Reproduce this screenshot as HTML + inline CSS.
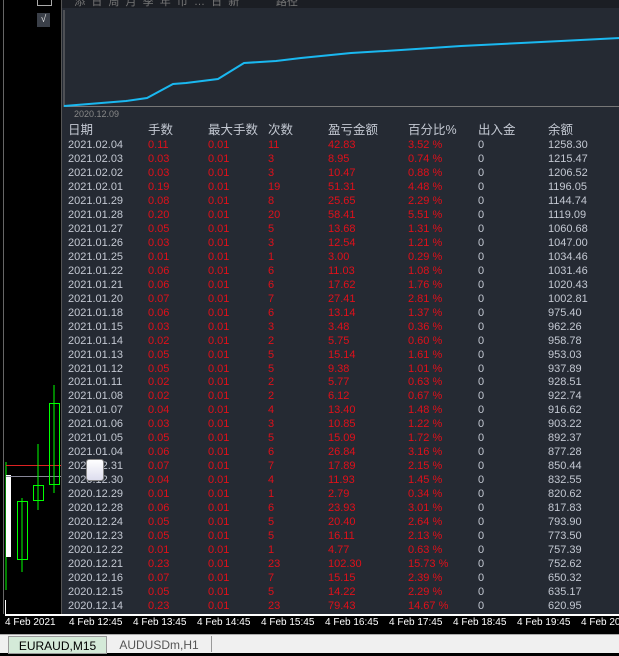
<!DOCTYPE html><html><head><meta charset="utf-8"><style>
body{margin:0;width:619px;height:652px;background:#000;position:relative;overflow:hidden;font-family:"Liberation Sans","Noto Sans CJK SC",sans-serif}
.p{position:absolute;left:61px;top:0;width:558px;height:614px;background:#252a33;border-left:1px solid #555}
.r{position:absolute;left:0;height:14px;font-size:11px;line-height:14px;width:558px}
.r span{position:absolute;top:0;color:#c3c8d2}
.r span.e{color:#e0101a}
.h{font-size:12.5px;color:#d0d4dc}
.ax{position:absolute;top:617px;font-size:10px;color:#fff;white-space:nowrap}
</style></head><body>
<div style="position:absolute;left:3px;top:0;width:1px;height:614px;background:#666"></div>
<div style="position:absolute;left:37px;top:13px;width:13px;height:14px;background:#3a3f48;color:#ddd;font-size:10px;text-align:center;line-height:14px">√</div>
<div style="position:absolute;left:37px;top:0;width:13px;height:5px;border:1px solid #aaa;border-top:0"></div>
<div class="p">
<div style="position:absolute;left:0;top:0;width:558px;height:8px;background:#1b1e24;color:#777;font-size:11px;line-height:4px;overflow:hidden">&nbsp;&nbsp;&nbsp;&nbsp;添 &nbsp;日 &nbsp;周 &nbsp;月 &nbsp;季 &nbsp;年 &nbsp;币 &nbsp;… &nbsp;日 &nbsp;新 &nbsp;&nbsp;&nbsp;&nbsp;&nbsp;&nbsp;&nbsp;&nbsp;&nbsp;&nbsp;&nbsp;路径</div>
<svg style="position:absolute;left:0;top:0" width="558" height="125">
<line x1="2" y1="10" x2="2" y2="107" stroke="#777"/>
<line x1="2" y1="106.5" x2="558" y2="106.5" stroke="#777"/>
<polyline fill="none" stroke="#1ab8f0" stroke-width="2" points="2,106 64,101 85,98 111,84 124,83 156,79 182,63 214,61 239,58 289,53 339,50 399,46 459,43 499,41 558,38"/>
<text x="12" y="117" fill="#888" font-size="9" font-family="Liberation Sans">2020.12.09</text>
</svg>
<div id="t"></div>
</div>
<svg style="position:absolute;left:0;top:380px" width="61" height="234">
<line x1="6" y1="82" x2="6" y2="210" stroke="#0f0"/>
<rect x="6" y="95" width="5" height="82" fill="#fff"/>
<line x1="6" y1="85.5" x2="61" y2="85.5" stroke="#d22"/>
<line x1="6" y1="96.5" x2="61" y2="96.5" stroke="#889"/>
<line x1="22" y1="118" x2="22" y2="192" stroke="#0f0"/><rect x="17.5" y="121.5" width="10" height="58" fill="none" stroke="#0f0"/>
<line x1="38" y1="64" x2="38" y2="130" stroke="#0f0"/><rect x="33.5" y="105.5" width="10" height="15" fill="none" stroke="#0f0"/>
<line x1="54" y1="5" x2="54" y2="113" stroke="#0f0"/><rect x="49.5" y="23.5" width="10" height="81" fill="none" stroke="#0f0"/>
</svg>
<div style="position:absolute;left:5px;top:614px;width:614px;height:2px;background:#fff"></div>
<div style="position:absolute;left:5px;top:600px;width:1px;height:14px;background:#fff"></div>
<div class="ax" style="left:5px">4 Feb 2021</div><div class="ax" style="left:69px">4 Feb 12:45</div><div class="ax" style="left:133px">4 Feb 13:45</div><div class="ax" style="left:197px">4 Feb 14:45</div><div class="ax" style="left:261px">4 Feb 15:45</div><div class="ax" style="left:325px">4 Feb 16:45</div><div class="ax" style="left:389px">4 Feb 17:45</div><div class="ax" style="left:453px">4 Feb 18:45</div><div class="ax" style="left:517px">4 Feb 19:45</div><div class="ax" style="left:581px">4 Feb 20:45</div>
<div style="position:absolute;left:0;top:634px;width:619px;height:18px;background:#f0f0f0;border-top:1px solid #aaa"></div>
<div style="position:absolute;left:8px;top:636px;width:97px;height:16px;background:#d4ead8;border:1px solid #999;font-size:12px;color:#000;text-align:center;line-height:19px">EURAUD,M15</div>
<div style="position:absolute;left:107px;top:636px;width:104px;height:16px;font-size:12px;color:#555;text-align:center;line-height:19px;border-right:1px solid #999">AUDUSDm,H1</div>
<div style="position:absolute;left:86px;top:459px;width:16px;height:20px;background:linear-gradient(#fff,#dde);border:1px solid #888;border-radius:3px"></div>
<script>
var d=`2021.02.04 0.11 11 42.83 3.52 1258.30
2021.02.03 0.03 3 8.95 0.74 1215.47
2021.02.02 0.03 3 10.47 0.88 1206.52
2021.02.01 0.19 19 51.31 4.48 1196.05
2021.01.29 0.08 8 25.65 2.29 1144.74
2021.01.28 0.20 20 58.41 5.51 1119.09
2021.01.27 0.05 5 13.68 1.31 1060.68
2021.01.26 0.03 3 12.54 1.21 1047.00
2021.01.25 0.01 1 3.00 0.29 1034.46
2021.01.22 0.06 6 11.03 1.08 1031.46
2021.01.21 0.06 6 17.62 1.76 1020.43
2021.01.20 0.07 7 27.41 2.81 1002.81
2021.01.18 0.06 6 13.14 1.37 975.40
2021.01.15 0.03 3 3.48 0.36 962.26
2021.01.14 0.02 2 5.75 0.60 958.78
2021.01.13 0.05 5 15.14 1.61 953.03
2021.01.12 0.05 5 9.38 1.01 937.89
2021.01.11 0.02 2 5.77 0.63 928.51
2021.01.08 0.02 2 6.12 0.67 922.74
2021.01.07 0.04 4 13.40 1.48 916.62
2021.01.06 0.03 3 10.85 1.22 903.22
2021.01.05 0.05 5 15.09 1.72 892.37
2021.01.04 0.06 6 26.84 3.16 877.28
2020.12.31 0.07 7 17.89 2.15 850.44
2020.12.30 0.04 4 11.93 1.45 832.55
2020.12.29 0.01 1 2.79 0.34 820.62
2020.12.28 0.06 6 23.93 3.01 817.83
2020.12.24 0.05 5 20.40 2.64 793.90
2020.12.23 0.05 5 16.11 2.13 773.50
2020.12.22 0.01 1 4.77 0.63 757.39
2020.12.21 0.23 23 102.30 15.73 752.62
2020.12.16 0.07 7 15.15 2.39 650.32
2020.12.15 0.05 5 14.22 2.29 635.17
2020.12.14 0.23 23 79.43 14.67 620.95`.split('\n');
var X=[6,86,146,206,266,346,416,486],h='<div class="r h" style="top:123px"><span style="left:6px">日期</span><span style="left:86px">手数</span><span style="left:146px">最大手数</span><span style="left:206px">次数</span><span style="left:266px">盈亏金额</span><span style="left:346px">百分比%</span><span style="left:416px">出入金</span><span style="left:486px">余额</span></div>';
d.forEach(function(l,i){var a=l.split(' ');var v=[a[0],a[1],'0.01',a[2],a[3],a[4]+' %','0',a[5]];
h+='<div class="r" style="top:'+(138+i*13.97)+'px">';v.forEach(function(s,j){h+='<span class="'+(j>0&&j<6?'e':'')+'" style="left:'+X[j]+'px">'+s+'</span>'});h+='</div>'});
document.getElementById('t').innerHTML=h;
</script>
</body></html>
